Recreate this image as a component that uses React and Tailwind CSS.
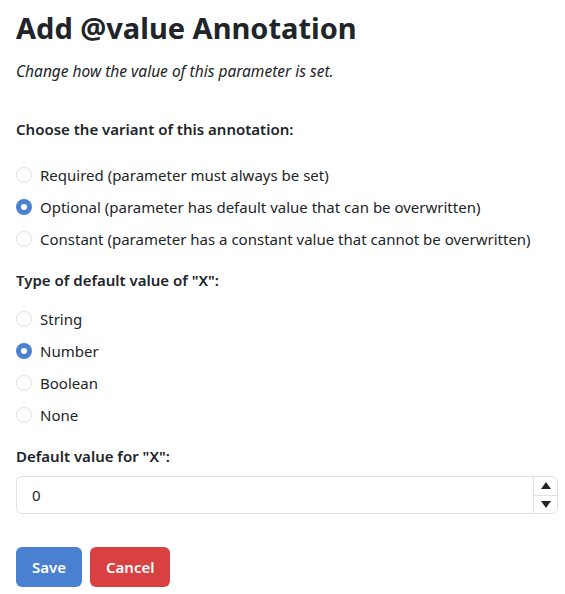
import React from "react";

function Radio({ checked, label }) {
  return (
    <div className="flex items-center h-[32px]">
      {checked ? (
        <span className="w-4 h-4 rounded-full bg-[#4a80d0] flex items-center justify-center shrink-0">
          <span className="w-[6px] h-[6px] rounded-full bg-white" />
        </span>
      ) : (
        <span className="w-4 h-4 rounded-full border border-[#dee2e6] bg-white shrink-0" />
      )}
      <span className="ml-2 text-[15px] leading-6 text-[#212529]">{label}</span>
    </div>
  );
}

export default function App() {
  return (
    <div
      className="bg-white min-h-[594px] pl-4 pr-[7px] pt-[10px] text-[#212529]"
      style={{ fontFamily: '"Noto Sans", "Open Sans", sans-serif' }}
    >
      <h1 className="text-[29px] leading-[36px] font-bold">Add @value Annotation</h1>
      <p className="mt-[13px] text-[15.5px] leading-6 italic">Change how the value of this parameter is set.</p>
      <div className="mt-[34px] text-[15px] leading-6 font-semibold">Choose the variant of this annotation:</div>
      <div className="mt-[18px]">
        <Radio label="Required (parameter must always be set)" />
        <Radio checked label="Optional (parameter has default value that can be overwritten)" />
        <Radio label="Constant (parameter has a constant value that cannot be overwritten)" />
      </div>
      <div className="mt-[13px] text-[15px] leading-6 font-semibold">Type of default value of "X":</div>
      <div className="mt-[11px]">
        <Radio label="String" />
        <Radio checked label="Number" />
        <Radio label="Boolean" />
        <Radio label="None" />
      </div>
      <div className="mt-[13px] text-[15px] leading-6 font-semibold">Default value for "X":</div>
      <div className="mt-2 h-[38px] border border-[#dee2e6] rounded-[6px] flex items-stretch">
        <div className="flex-1 flex items-center pl-[15px] text-[15px]">0</div>
        <div className="w-[24px] border-l border-[#dee2e6] flex flex-col">
          <div className="flex-1 flex items-center justify-center border-b border-[#dee2e6]">
            <svg width="10" height="7" viewBox="0 0 10 7"><polygon points="5,0 10,7 0,7" fill="#212529" /></svg>
          </div>
          <div className="flex-1 flex items-center justify-center">
            <svg width="10" height="7" viewBox="0 0 10 7"><polygon points="0,0 10,0 5,7" fill="#212529" /></svg>
          </div>
        </div>
      </div>
      <div className="mt-[33px] flex gap-2">
        <button className="h-10 px-4 rounded-[6px] bg-[#4a80d0] text-white text-[15px] font-semibold">Save</button>
        <button className="h-10 px-4 rounded-[6px] bg-[#d94042] text-white text-[15px] font-semibold">Cancel</button>
      </div>
    </div>
  );
}
